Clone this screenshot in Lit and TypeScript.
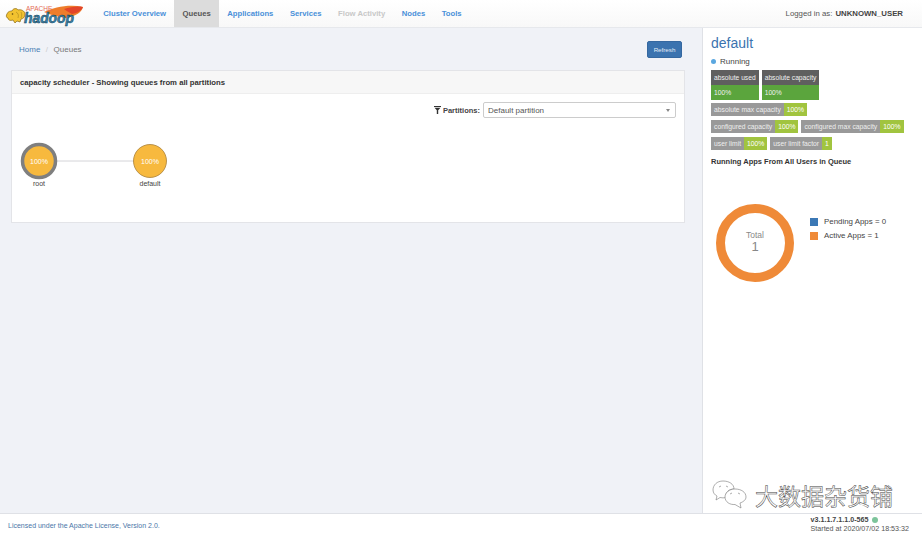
import { LitElement, html, css } from "lit";
import { customElement } from "lit/decorators.js";

@customElement("app-root")
export class AppRoot extends LitElement {
  static styles = css`
    :host { display: flex; flex-direction: column; width: 922px; height: 535px; overflow: hidden; background: #f0f2f7; font-family: "Liberation Sans", Arial, sans-serif; color: #333; }
    .nav { height: 28px; box-sizing: border-box; flex: none; display: flex; align-items: stretch; background: linear-gradient(#fff, #f8f8f8); border-bottom: 1px solid #e6e8ec; font-size: 7.7px; }
    .logo { width: 95px; flex: none; display: block; }
    .tabs { display: flex; flex: 1; }
    .tab { display: flex; align-items: center; padding: 0 8.25px; color: #4a90d9; font-weight: 700; }
    .tab.active { background: #dcdcdc; color: #555; }
    .tab.off { color: #c8c8c8; }
    .login { display: flex; align-items: center; padding-right: 19px; color: #555; font-size: 7.8px; }
    .login b { margin-left: 3px; color: #444; }
    .body { flex: 1; display: flex; min-height: 0; }
    .left { flex: 1; min-width: 0; padding: 0 17px 0 11px; }
    .crumbs { display: flex; align-items: center; justify-content: space-between; height: 42px; padding: 0 3px 0 8px; font-size: 8px; }
    .crumbs a { color: #4a7fb5; }
    .crumbs .sep { color: #ccc; margin: 0 5.5px; }
    .crumbs .cur { color: #777; }
    .refresh { width: 35px; height: 17px; display: flex; align-items: center; justify-content: center; background: #3b73af; border: 1px solid #3568a0; border-radius: 2px; box-sizing: border-box; color: #e4edf6; font-size: 6.2px; }
    .panel { background: #fff; border: 1px solid #e3e4e8; height: 153px; box-sizing: border-box; }
    .phead { height: 22px; background: #f7f7f7; border-bottom: 1px solid #eee; display: flex; align-items: center; padding-left: 8px; font-size: 7.72px; font-weight: 700; color: #333; }
    .filter { display: flex; justify-content: flex-end; align-items: center; padding: 8px 8px 0 0; font-size: 7.5px; font-weight: 700; color: #444; gap: 2px; }
    .select { width: 193px; height: 16px; box-sizing: border-box; border: 1px solid #ccc; border-radius: 2px; display: flex; align-items: center; justify-content: space-between; padding: 0 5px 0 4px; font-weight: 400; color: #555; font-size: 8px; margin-left: 1px; }
    .caret { width: 0; height: 0; border-left: 2px solid transparent; border-right: 2px solid transparent; border-top: 3px solid #888; }
    .graph { display: block; margin-top: 5px; }
    .graph text { font-family: "Liberation Sans", Arial, sans-serif; font-size: 7px; text-anchor: middle; }
    .right { width: 220px; flex: none; background: #fff; border-left: 1px solid #dfe1e6; box-sizing: border-box; padding: 0 8px; display: flex; flex-direction: column; position: relative; }
    h1 { margin: 7px 0 0; font-size: 14px; line-height: 17px; font-weight: 400; color: #3b73af; }
    .state { display: flex; align-items: center; gap: 4px; font-size: 8px; color: #444; margin-top: 4px; height: 10px; }
    .dot { width: 5px; height: 5px; border-radius: 50%; background: #5aa7e0; }
    .row { display: flex; gap: 3px; margin-top: 4px; }
    .row.first { margin-top: 4px; margin-bottom: -1px; }
    .big { display: flex; flex-direction: column; font-size: 6.7px; color: #f0f0f0; white-space: nowrap; }
    .big span { height: 15px; display: flex; align-items: center; padding: 0 3px; background: #5f5f5f; }
    .big span + span { background: #5ba53d; }
    .lab { display: flex; height: 13px; font-size: 6.75px; color: #eee; white-space: nowrap; }
    .lab span { display: flex; align-items: center; padding: 0 3px; background: #999; }
    .lab span + span { background: #a1c43f; color: #fff; }
    .title { font-size: 7.5px; font-weight: 700; color: #333; margin-top: 7px; }
    .chart { display: flex; margin-top: 37px; margin-left: 4px; }
    .chart svg text { font-family: "Liberation Sans", Arial, sans-serif; text-anchor: middle; fill: #888; }
    .legend { margin-left: 15px; margin-top: 14px; font-size: 7.9px; color: #444; display: flex; flex-direction: column; gap: 5px; }
    .legend div { display: flex; align-items: center; gap: 6px; height: 9px; }
    .sw { width: 8px; height: 8px; display: block; }
    .mark { position: absolute; left: 9px; top: 452px; display: flex; align-items: center; gap: 7px; font-family: "Noto Sans CJK SC", sans-serif; font-size: 23px; line-height: 28px; color: #fff; -webkit-text-stroke: 0.5px #444; }
    .foot { height: 22px; flex: none; background: #fff; border-top: 1px solid #dfe1e6; box-sizing: border-box; display: flex; justify-content: space-between; align-items: center; padding: 1px 13px 0 8px; font-size: 7px; }
    .foot a { color: #4a76a8; }
    .ver { color: #555; line-height: 9.5px; font-size: 7.15px; }
    .ver b { display: flex; align-items: center; gap: 3px; color: #444; }
    .ver i { width: 6px; height: 6px; border-radius: 50%; background: #7dc49b; display: block; }
  `;

  render() {
    const lab = (a: string, b: string) => html`<div class="lab"><span>${a}</span><span>${b}</span></div>`;
    return html`
      <div class="nav">
        <svg class="logo" viewBox="0 0 95 27" aria-hidden="true">
          <path d="M44 12C54 7 70 4 83 7C82 12 76 16 66 18C58 17 50 15 44 12Z" fill="#ee7d2b"/>
          <path d="M64 9C70 7 77 6 83 7C82 10 78 13 72 14C69 12 66 11 64 9Z" fill="#e2452a"/>
          <path d="M7 14C8 11 11 11 12 11C13 8 17 8 18 10C21 9 25 11 25 14C25 17 23 19 21 19L20 22L17 21L15 23L13 20C10 21 8 20 8 18C6 18 6 15 7 14Z" fill="#f2c230" stroke="#8a6a14" stroke-width="0.7"/>
          <circle cx="12.5" cy="14" r="0.8" fill="#5b4510"/>
          <path d="M16 12C18 13 19 15 18 18M21 12C22 14 22 16 21 18" fill="none" stroke="#a8841c" stroke-width="0.6"/>
          <text x="26" y="10.5" font-family="Liberation Sans" font-size="6.5" fill="#e46a55">APACHE</text>
          <text x="24" y="23" font-family="Liberation Sans" font-size="14" font-weight="700" font-style="italic" fill="#3d86ad" stroke="#123c52" stroke-width="0.5" textLength="50" lengthAdjust="spacingAndGlyphs">hadoop</text>
        </svg>
        <div class="tabs">
          <div class="tab">Cluster Overview</div>
          <div class="tab active">Queues</div>
          <div class="tab">Applications</div>
          <div class="tab">Services</div>
          <div class="tab off">Flow Activity</div>
          <div class="tab">Nodes</div>
          <div class="tab">Tools</div>
        </div>
        <div class="login">Logged in as: <b>UNKNOWN_USER</b></div>
      </div>
      <div class="body">
        <div class="left">
          <div class="crumbs">
            <div><a>Home</a><span class="sep">/</span><span class="cur">Queues</span></div>
            <div class="refresh">Refresh</div>
          </div>
          <div class="panel">
            <div class="phead">capacity scheduler - Showing queues from all partitions</div>
            <div class="filter">
              <svg width="7" height="8" viewBox="0 0 7 8"><path d="M0 0H7V1H0ZM0.5 1.8H6.5L4.2 4.2V8H2.8V4.2Z" fill="#333"/></svg>
              <span>Partitions:</span>
              <div class="select"><span>Default partition</span><i class="caret"></i></div>
            </div>
            <svg class="graph" width="300" height="80" viewBox="0 0 300 80">
              <line x1="44" y1="38" x2="122" y2="38" stroke="#d4d4d8" stroke-width="1"/>
              <circle cx="27" cy="38" r="16.5" fill="#f7b93e" stroke="#7f7f7f" stroke-width="3.5"/>
              <text x="27" y="40.5" fill="#fff">100%</text>
              <text x="27" y="63" fill="#444">root</text>
              <circle cx="138" cy="38" r="16.5" fill="#f7b93e" stroke="#a8803a" stroke-width="0.8"/>
              <text x="138" y="40.5" fill="#fff">100%</text>
              <text x="138" y="63" fill="#444">default</text>
            </svg>
          </div>
        </div>
        <div class="right">
          <h1>default</h1>
          <div class="state"><i class="dot"></i>Running</div>
          <div class="row first">
            <div class="big"><span>absolute used</span><span>100%</span></div>
            <div class="big"><span>absolute capacity</span><span>100%</span></div>
          </div>
          <div class="row">${lab("absolute max capacity", "100%")}</div>
          <div class="row">${lab("configured capacity", "100%")}${lab("configured max capacity", "100%")}</div>
          <div class="row">${lab("user limit", "100%")}${lab("user limit factor", "1")}</div>
          <div class="title">Running Apps From All Users in Queue</div>
          <div class="chart">
            <svg width="80" height="80" viewBox="0 0 80 80">
              <circle cx="40" cy="40" r="34.5" fill="none" stroke="#ef8a38" stroke-width="9"/>
              <text x="40" y="35" font-size="8.5">Total</text>
              <text x="40" y="48" font-size="13">1</text>
            </svg>
            <div class="legend">
              <div><i class="sw" style="background:#3b78b5"></i>Pending Apps = 0</div>
              <div><i class="sw" style="background:#ef8a38"></i>Active Apps = 1</div>
            </div>
          </div>
          <div class="mark">
            <svg width="36" height="29" viewBox="0 0 36 29" fill="#fff" stroke="#777" stroke-width="0.6">
              <path d="M11 1C5 1 1 5 1 10C1 13 3 15 5 16L4 20L8 17.5C10 18 12 18 14 17.5C13 12 17 9 22 9C22 4 17 1 11 1Z"/>
              <path d="M23 9C17 9 13 13 13 17C13 22 18 25 23 24.5L29 28L28 23C31 22 34 20 34 17C34 12 29 9 23 9Z"/>
              <path d="M7 7L9 6M14 6L16 7M18 14L20 13M26 13L28 14" fill="none"/>
            </svg>
            <span>大数据杂货铺</span>
          </div>
        </div>
      </div>
      <div class="foot">
        <a>Licensed under the Apache License, Version 2.0.</a>
        <div class="ver"><b>v3.1.1.7.1.1.0-565 <i></i></b>Started at 2020/07/02 18:53:32</div>
      </div>
    `;
  }
}
